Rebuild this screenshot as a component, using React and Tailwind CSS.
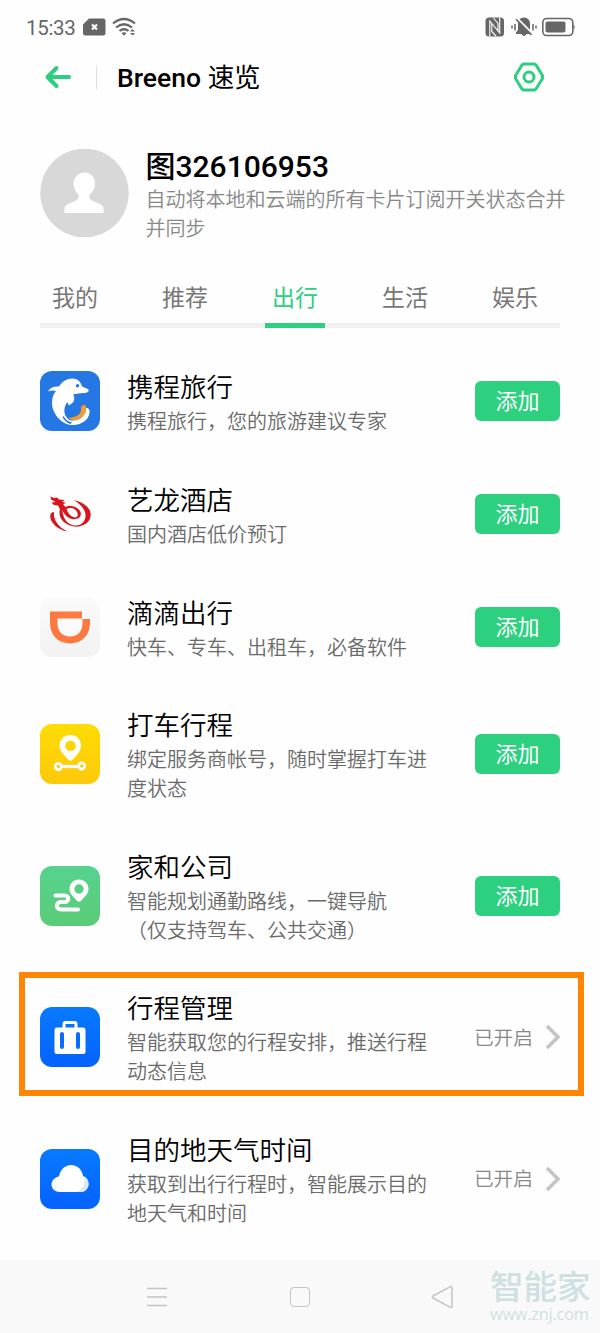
import React, { useState } from "react";
import clsx from "clsx";

const TABS = ["我的", "推荐", "出行", "生活", "娱乐"];

function CtripIcon() {
  return (
    <svg className="h-[60px] w-[60px] shrink-0" viewBox="0 0 60 60" aria-hidden="true">
      <rect width="60" height="60" rx="12" fill="#2577e3" />
      <path
        d="M8 20.500C10 16.500 14 15 19 15.500C22 10.500 27 7.500 32 7.500C37.500 7.500 41 11 42 15.500L48 18C50 20 47.500 22 44 22C40 22.500 36 22.500 33 23.500C35.500 26.500 34.500 32.500 28.500 34.500C28.500 32.500 28 31.500 27 31.500C24 36 23.500 41.500 26 45.500C28.500 50 33 50.500 38 48.500C43 46.500 45 43 46 37C49 37 50 39 49.500 42C48.500 49.500 40.500 54.500 31.500 54C20.500 53 12 42 12 32C12 26.500 13.500 22.500 16 20C13 19 10.500 19.500 8 20.500Z"
        fill="#fff"
      />
      <path d="M41 38C40.500 34.500 44 32.500 46 35.500C47.500 40.500 43.500 46 38 48.500C34 50 30.500 49 28 46.500C33 48 42 43.500 41 38Z" fill="#f29a2e" />
      <path d="M23.500 45C26 49.500 29 51 32 51L30.500 53C27 52 24 49 22.500 46Z" fill="#2577e3" />
      <circle cx="37.500" cy="14.800" r="1.700" fill="#2577e3" />
    </svg>
  );
}

function ElongIcon() {
  return (
    <svg className="h-[60px] w-[60px] shrink-0" viewBox="0 0 60 60" aria-hidden="true">
      <g fill="#d8141c">
        <path d="M10.500 12.500L14 14L17 13.500L19 15.500L25 16L22 17.500L26 19L23 20L25.500 23L21 27L18 21.500L14 21L11.500 18.500L15.500 18L11 15.500Z" />
        <path d="M33.500 16C43 18 50.500 23.500 50.700 30.500C50.700 39 42 43.500 34 42.500C25 41 19 35.500 19.500 28C19.700 25 20.500 23 22 21.500C22 33 26 40.500 35 41.500C42 42 46 36.500 45.500 30.500C45 24.500 39.500 19.500 33.500 16Z" />
        <path
          fillRule="evenodd"
          d="M20 22L24.500 23.500C30 20.500 38 22.500 40.500 28C42 33 38 35.500 33 35.200C28 34.500 24 31 20 22ZM26.500 25C28 29.500 31.500 33.500 35.500 33.500C39 33 38 28.500 35.500 26C33 23.500 29.500 23.500 26.500 25Z"
        />
        <path d="M14 28C12.800 36 19 43.500 27.500 47.500C18 46 10 38.500 10.200 32C10.300 29.500 12 28 14 28Z" />
      </g>
    </svg>
  );
}

function DidiIcon() {
  return (
    <svg className="h-[60px] w-[60px] shrink-0" viewBox="0 0 60 60" aria-hidden="true">
      <defs>
        <linearGradient id="didi" x1="0" y1="0" x2="0" y2="1">
          <stop stopColor="#fbfbfb" />
          <stop offset="1" stopColor="#f2f2f2" />
        </linearGradient>
      </defs>
      <rect width="60" height="60" rx="12" fill="url(#didi)" />
      <path d="M10 14.500H42V21.500H50V26C50 38 42 46.500 30 46.500S10 38 10 26Z" fill="#fc7a41" />
      <path d="M17.500 21.500H42.500V26C42.500 34.500 37.500 39.500 30 39.500S17.500 34.500 17.500 26Z" fill="#fafafa" />
      <path d="M42.500 14.500V21.500H50" fill="none" stroke="#fafafa" strokeWidth="0.900" />
    </svg>
  );
}

function TaxiIcon() {
  return (
    <svg className="h-[60px] w-[60px] shrink-0" viewBox="0 0 60 60" aria-hidden="true">
      <defs>
        <linearGradient id="taxi" x1="0" y1="0" x2="0" y2="1">
          <stop stopColor="#fedc03" />
          <stop offset="1" stopColor="#fdc90b" />
        </linearGradient>
      </defs>
      <rect width="60" height="60" rx="12" fill="url(#taxi)" />
      <path
        fillRule="evenodd"
        d="M30.500 11C24.300 11 19.500 15.700 19.500 21.500C19.500 27.500 25 32 28.500 35.700Q30.500 37.500 32.500 35.700C36 32 41 27.500 41 21.500C41 15.700 36.700 11 30.500 11ZM30.500 16.500A5.300 5.300 0 1 1 30.500 27.100A5.300 5.300 0 1 1 30.500 16.500Z"
        fill="#fff"
      />
      <path d="M21 42.500H38" stroke="#fff" strokeWidth="3.200" />
      <circle cx="18.300" cy="42.500" r="3.100" fill="none" stroke="#fff" strokeWidth="2.700" />
      <circle cx="41.700" cy="42" r="3.100" fill="none" stroke="#fff" strokeWidth="2.700" />
    </svg>
  );
}

function CommuteIcon() {
  return (
    <svg className="h-[60px] w-[60px] shrink-0" viewBox="0 0 60 60" aria-hidden="true">
      <defs>
        <linearGradient id="commute" x1="0" y1="0" x2="0" y2="1">
          <stop stopColor="#56d28f" />
          <stop offset="1" stopColor="#5acc76" />
        </linearGradient>
      </defs>
      <rect width="60" height="60" rx="12" fill="url(#commute)" />
      <path
        fillRule="evenodd"
        d="M39 13.500C33.700 13.500 29.500 17.500 29.500 23C29.500 28 34 31.500 37.200 35Q39 36.600 40.800 35C44 31.500 48.500 28 48.500 23C48.500 17.500 44.300 13.500 39 13.500ZM39 18.300A4.700 4.700 0 1 1 39 27.700A4.700 4.700 0 1 1 39 18.300Z"
        fill="#fff"
      />
      <path
        d="M15.500 29.500H24.500C29.500 29.500 29.500 36 24.500 36H21C15.500 36 15.500 43.500 21 43.500H38"
        fill="none"
        stroke="#fff"
        strokeWidth="4"
        strokeLinecap="round"
      />
    </svg>
  );
}

function TripIcon() {
  return (
    <svg className="h-[60px] w-[60px] shrink-0" viewBox="0 0 60 60" aria-hidden="true">
      <defs>
        <linearGradient id="trip" x1="0" y1="0" x2="0" y2="1">
          <stop stopColor="#087aff" />
          <stop offset="1" stopColor="#0562ff" />
        </linearGradient>
      </defs>
      <rect width="60" height="60" rx="12" fill="url(#trip)" />
      <path d="M24 22V17Q24 15.500 25.500 15.500H34.500Q36 15.500 36 17V22" fill="none" stroke="#fff" strokeWidth="3" />
      <rect x="14.500" y="20.500" width="31" height="26.500" rx="2.500" fill="#fff" />
      <path d="M22 27V40M38 27V40" stroke="#086dff" strokeWidth="4" strokeLinecap="round" />
    </svg>
  );
}

function WeatherIcon() {
  return (
    <svg className="h-[60px] w-[60px] shrink-0" viewBox="0 0 60 60" aria-hidden="true">
      <defs>
        <linearGradient id="weather" x1="0" y1="0" x2="0" y2="1">
          <stop stopColor="#087aff" />
          <stop offset="1" stopColor="#0562ff" />
        </linearGradient>
      </defs>
      <rect width="60" height="60" rx="12" fill="url(#weather)" />
      <path d="M20 43C15 43 11.500 39.500 11.500 35.500S15 28 19 27.500C20 21 25 16 31 16C38 16 42 21 43 27C46 28 48.500 31 48.500 35C48.500 39.500 45 43 40.500 43Z" fill="#fff" />
      <path d="M44.500 27.800C47 29 48.500 31.500 48.500 35C48.500 39.500 45 43 40.500 43H37C43 40 45.500 34.500 44.500 27.800Z" fill="#dbe9fc" />
    </svg>
  );
}

const CARDS = [
  { id: "ctrip", title: "携程旅行", lines: ["携程旅行，您的旅游建议专家"], Icon: CtripIcon },
  { id: "elong", title: "艺龙酒店", lines: ["国内酒店低价预订"], Icon: ElongIcon },
  { id: "didi", title: "滴滴出行", lines: ["快车、专车、出租车，必备软件"], Icon: DidiIcon },
  { id: "taxi", title: "打车行程", lines: ["绑定服务商帐号，随时掌握打车进", "度状态"], Icon: TaxiIcon },
  { id: "commute", title: "家和公司", lines: ["智能规划通勤路线，一键导航", "（仅支持驾车、公共交通）"], Icon: CommuteIcon },
  { id: "trip", title: "行程管理", lines: ["智能获取您的行程安排，推送行程", "动态信息"], Icon: TripIcon, enabled: true, highlighted: true },
  { id: "weather", title: "目的地天气时间", lines: ["获取到出行行程时，智能展示目的", "地天气和时间"], Icon: WeatherIcon, enabled: true }
];

function StatusBar() {
  return (
    <div className="flex h-[54px] items-center pl-[26px] pr-[24px] text-[#666]">
      <span className="w-[49px] pt-[3px] text-[20.5px] leading-none tracking-[-0.3px]">15:33</span>
      <svg className="ml-[8px] h-[18px] w-[23px]" viewBox="0 0 23 18" aria-hidden="true">
        <path d="M6 0.500H20Q22.500 0.500 22.500 3V15Q22.500 17.500 20 17.500H2.500Q0 17.500 0 15V6.500Z" fill="currentColor" />
        <path d="M9 6.500L14 11.500M14 6.500L9 11.500" stroke="#fff" strokeWidth="2.200" />
      </svg>
      <svg className="ml-[6px] h-[20px] w-[25px]" viewBox="0 0 25 20" fill="none" stroke="currentColor" aria-hidden="true">
        <path d="M1 6.500Q12 -2.500 23 6.500" strokeWidth="2.200" />
        <path d="M4 10.500Q12 4 20 10.500M7.500 14Q12 10.500 16.500 14" strokeWidth="2.200" />
        <path d="M9.500 16L12 18.800L14.500 16Q12 14.700 9.500 16Z" fill="currentColor" stroke="none" />
        <path d="M18 14.500L20.500 12L23 14.500ZM18 16L20.500 18.500L23 16Z" fill="currentColor" stroke="none" />
      </svg>
      <div className="ml-auto flex items-center">
        <svg className="h-[20px] w-[20px]" viewBox="0 0 20 20" aria-hidden="true">
          <rect x="0.500" y="0.500" width="18.500" height="19" rx="3.500" fill="currentColor" />
          <path d="M4.800 19.500V4L13 14V6.500L8.500 1M14.700 0.500V16L6.800 6.500V14.500L11 19" fill="none" stroke="#fff" strokeWidth="1.100" />
        </svg>
        <svg className="ml-[6px] h-[20px] w-[26px]" viewBox="0 0 26 20" aria-hidden="true">
          <path d="M13 0.500C17 0.500 19 3.500 19 7V13L21 15.500V17H5V15.500L7 13V7C7 3.500 9 0.500 13 0.500ZM10.500 17H15.500Q13 21 10.500 17Z" fill="currentColor" />
          <path d="M5.500 0.500L22 17" stroke="#fff" strokeWidth="1.800" />
          <path d="M5 2.200L20.500 18" stroke="currentColor" strokeWidth="1.600" />
          <path d="M1 8.500V11.500M4 7V13.500M22 7V13.500M25 8.500V11.500" stroke="currentColor" strokeWidth="1.500" />
        </svg>
        <svg className="ml-[5px] h-[20px] w-[34px]" viewBox="0 0 34 20" aria-hidden="true">
          <rect x="0.800" y="1.500" width="30" height="17" rx="4" fill="none" stroke="currentColor" strokeWidth="1.600" />
          <rect x="3.500" y="4.500" width="20" height="11" rx="2" fill="currentColor" />
          <path d="M31.500 7.500Q34 10 31.500 12.500Z" fill="currentColor" />
        </svg>
      </div>
    </div>
  );
}

function Header() {
  return (
    <header className="flex h-[46px] items-center pl-[44px] pr-[54px]">
      <svg className="h-[24px] w-[27px]" viewBox="0 0 27 24" fill="none" stroke="#2ece80" strokeWidth="4" strokeLinecap="round" strokeLinejoin="round" aria-hidden="true">
        <path d="M25 12H3.500M12.500 3L3.500 12L12.500 21" />
      </svg>
      <div className="ml-[25px] h-[23px] w-px bg-[#dedede]" />
      <h1 className="ml-[20px] pt-[2px] text-[26.5px] leading-none font-medium text-black">
        Breeno <span className="font-normal">速览</span>
      </h1>
      <svg className="ml-auto h-[30px] w-[33px]" viewBox="0 0 33 30" fill="none" stroke="#2ece80" aria-hidden="true">
        <path d="M10.500 2H21.500L23 3L29.500 13.500V16.500L23 27L21.500 28H10.500L9 27L2.500 16.500V13.500L9 3Z" strokeWidth="3" strokeLinejoin="round" />
        <circle cx="16" cy="15" r="5" strokeWidth="3" />
      </svg>
    </header>
  );
}

function Profile() {
  return (
    <section className="flex h-[154px] items-start pt-[49px] pl-[40px]">
      <svg className="h-[89px] w-[89px] shrink-0" viewBox="0 0 89 89" aria-hidden="true">
        <circle cx="44.500" cy="44" r="44.300" fill="#d8d8d8" />
        <path
          d="M44.500 23.500C38 23.500 33.500 28.500 33.500 34.500C33.500 39.500 36 43 38.500 46C39.500 49 37.500 51 34 52.500L28 55C25 56.500 24.500 58 24.500 60V64H63.500V60C63.500 58 63 56.500 60 55L54 52.500C50.500 51 48.500 49 49.500 46C52.500 43 55 39.500 55 34.500C55 28.500 51 23.500 44.500 23.500Z"
          fill="#fff"
        />
      </svg>
      <div className="ml-[16.5px] w-[424px]">
        <div className="h-[37px] text-[30px] leading-[36px] font-medium text-black">图326106953</div>
        <p className="text-[20px] leading-[29px] font-[350] text-[#888]">
          自动将本地和云端的所有卡片订阅开关状态合并并同步
        </p>
      </div>
    </section>
  );
}

function Card({ title, lines, Icon, enabled, highlighted }) {
  return (
    <li className={clsx("relative flex items-center pl-[40px] pr-[40px]", lines.length > 1 ? "h-[141.5px]" : "h-[113px]")}>
      <Icon />
      <div className="ml-[27px] flex-1 pt-[2px] whitespace-nowrap">
        <h2 className="text-[26.5px] leading-[40px] font-[350] text-black">{title}</h2>
        {lines.map((line) => (
          <p key={line} className="text-[20px] leading-[29px] font-[350] text-[#6a6a6a]">
            {line}
          </p>
        ))}
      </div>
      {enabled ? (
        <div className="flex items-center">
          <span className="pt-[2px] text-[19.7px] leading-[29px] font-[350] text-[#888]">已开启</span>
          <svg className="ml-[12px] h-[26px] w-[15px]" viewBox="0 0 15 26" fill="none" stroke="#c4c4c4" strokeWidth="3.600" aria-hidden="true">
            <path d="M2 2L13 13L2 24" />
          </svg>
        </div>
      ) : (
        <button type="button" className="h-[40px] w-[85px] rounded-[6px] bg-[#2cd07f] pt-[2px] text-[22px] leading-[38px] text-white">
          添加
        </button>
      )}
      {highlighted && (
        <div className="pointer-events-none absolute top-[5px] left-[19px] h-[124px] w-[565px] border-6 border-[#ff8503]" />
      )}
    </li>
  );
}

function NavBar() {
  return (
    <nav className="relative flex h-[73px] items-center bg-[#f9f9f9] pl-[146px]">
      <svg className="h-[22px] w-[22px]" viewBox="0 0 22 22" stroke="#c4c4c4" strokeWidth="1.500" aria-hidden="true">
        <path d="M1 2.500H21M1 11H21M1 19.500H21" />
      </svg>
      <div className="ml-[122px] h-[20px] w-[20px] rounded-[4px] border-[1.5px] border-[#c4c4c4]" />
      <svg className="ml-[121px] h-[24px] w-[22px]" viewBox="0 0 22 24" fill="none" stroke="#c4c4c4" strokeWidth="1.500" strokeLinejoin="round" aria-hidden="true">
        <path d="M19 1.800Q21 1 21 3V21Q21 23 19 22.200L2 13Q0.500 12 2 11Z" />
      </svg>
      <div className="absolute top-[11px] left-[490px] w-[102px] text-[#cfe0e2]">
        <div className="h-[34px] text-[33.5px] leading-[34px] font-medium whitespace-nowrap">智能家</div>
        <div className="font-['Open_Sans','Noto_Sans',sans-serif] text-[16.3px] leading-[18px] font-medium tracking-[-0.2px] whitespace-nowrap">www.znj.com</div>
      </div>
    </nav>
  );
}

function App() {
  const [activeTab, setActiveTab] = useState("出行");

  return (
    <div className="flex h-[1333px] w-[600px] flex-col overflow-hidden bg-[#fefefe] font-['Roboto','Noto_Sans_CJK_SC',sans-serif]">
      <StatusBar />
      <Header />
      <Profile />
      <div className="h-[74px] pt-[27px]">
        <div className="flex h-[42px] px-[20px]">
          {TABS.map((tab) => (
            <button
              key={tab}
              type="button"
              onClick={() => setActiveTab(tab)}
              className={clsx("h-[36px] w-[110px] text-[23px] leading-[36px]", tab === activeTab ? "text-[#2cd07f]" : "text-[#777]")}
            >
              {tab}
            </button>
          ))}
        </div>
        <div className="mx-[40px] flex h-[5px] bg-[#f0f0f0]">
          <div
            className="h-full w-[60px] bg-[#2cd07f]"
            style={{ marginLeft: TABS.indexOf(activeTab) * 110 + 5 }}
          />
        </div>
      </div>
      <ul className="flex-1 pt-[16.5px]">
        {CARDS.map((card) => (
          <Card key={card.id} {...card} />
        ))}
      </ul>
      <NavBar />
    </div>
  );
}

export default App;
